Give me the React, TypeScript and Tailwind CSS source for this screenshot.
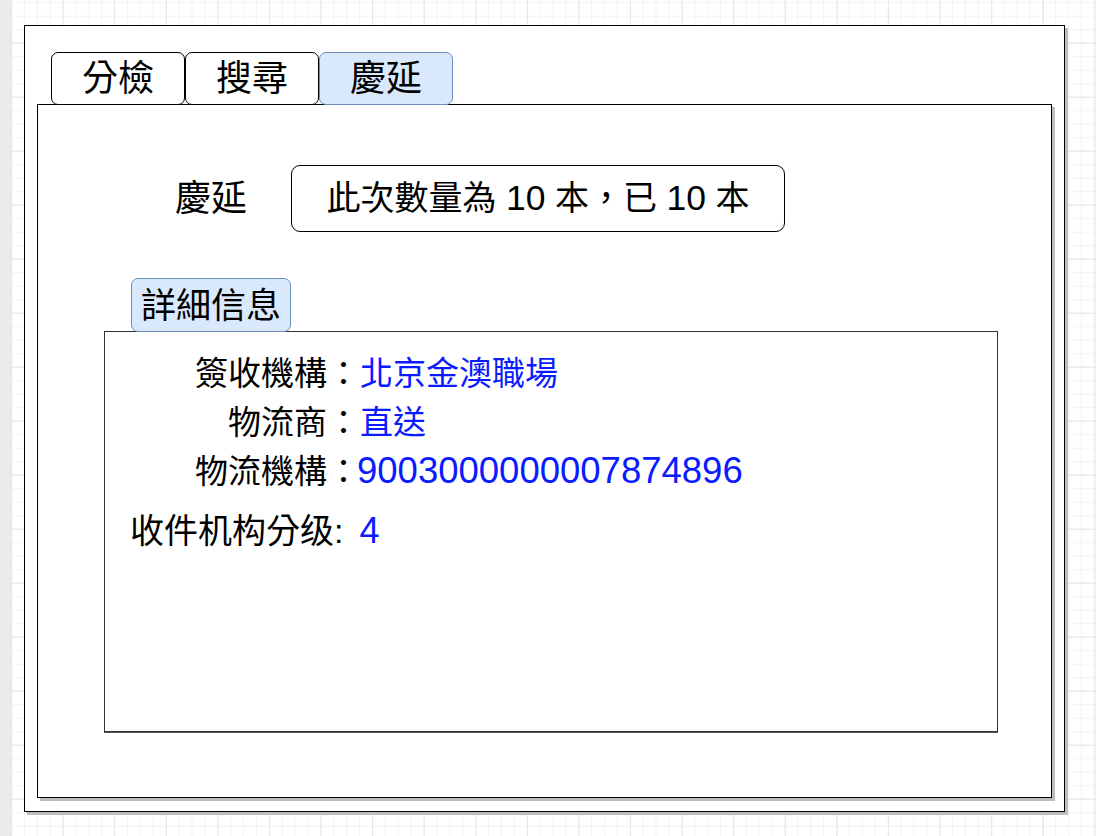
import React from 'react';

const font = { fontFamily: '"Liberation Sans", "Noto Sans CJK TC", sans-serif' };

const tabs = [
    { label: '分檢', active: false },
    { label: '搜尋', active: false },
    { label: '慶延', active: true },
];

const details = [
    { label: '簽收機構：', value: '北京金澳職場' },
    { label: '物流商：', value: '直送' },
    { label: '物流機構：', value: '9003000000007874896', num: true },
];

export default function App() {
    return (
        <div className="flex min-h-screen w-full text-black" style={font}>
            {/* left gutter */}
            <div className="w-[11px] shrink-0 bg-[#ebebeb]" />

            {/* canvas with grid */}
            <div className="h-[836px] flex-1 bg-white bg-[linear-gradient(to_right,#e6e6e6_1px,transparent_1px),linear-gradient(to_bottom,#e6e6e6_1px,transparent_1px),linear-gradient(to_right,#f3f3f3_1px,transparent_1px),linear-gradient(to_bottom,#f3f3f3_1px,transparent_1px)] bg-[size:51.6px_54px,51.6px_54px,12.9px_13.5px,12.9px_13.5px] bg-[position:51.6px_42.7px,51.6px_42.7px,0px_2.2px,0px_2.2px] pl-[13px] pt-[25px]">
                {/* outer frame */}
                <div className="flex h-[787px] w-[1041px] flex-col border-[1.5px] border-black bg-white pl-[12px] pt-[26px] shadow-[3px_3px_0_#bdbdbd]">
                    {/* tabs */}
                    <div className="relative z-10 flex pl-[14px]">
                        {tabs.map((t) => (
                            <div
                                key={t.label}
                                className={`flex h-[53px] w-[134px] items-center justify-center rounded-[7px] border text-[36px] leading-none ${
                                    t.active ? 'border-[#6c8ebf] bg-[#dae8fc]' : 'border-black bg-white'
                                }`}
                            >
                                {t.label}
                            </div>
                        ))}
                    </div>

                    {/* main panel */}
                    <div className="-mt-px h-[694px] w-[1015px] border-[1.5px] border-black bg-white pt-[60px] shadow-[3px_3px_0_#bdbdbd]">
                        <div className="flex items-center pl-[137px]">
                            <span className="text-[36px] leading-none">慶延</span>
                            <div className="ml-[44px] flex h-[67px] w-[494px] items-center justify-center rounded-[9px] border border-black text-[34px] leading-none">
                                <span>
                                    此次數量為 <span className="text-[35.5px]">10</span> 本，已{' '}
                                    <span className="text-[35.5px]">10</span> 本
                                </span>
                            </div>
                        </div>

                        {/* details */}
                        <div className="mt-[46px] pl-[66px]">
                            <div className="relative z-10 ml-[27px] flex h-[54px] w-[160px] items-center justify-center rounded-[7px] border border-[#6c8ebf] bg-[#dae8fc] text-[35px] leading-none">
                                詳細信息
                            </div>
                            <div className="-mt-px h-[401px] w-[894px] border border-[#333] bg-white pt-[17px] shadow-[0_1px_0_#555]">
                                {details.map((d) => (
                                    <div key={d.label} className="flex h-[49px] items-center text-[33px] leading-none">
                                        <span className="w-[255px] text-right">{d.label}</span>
                                        <span className={`text-[#0a1bff] ${d.num ? '-ml-[3px] text-[36.5px]' : ''}`}>{d.value}</span>
                                    </div>
                                ))}
                                <div className="mt-[10px] flex h-[49px] items-center pl-[25px] text-[34px] leading-none">
                                    <span>收件机构分级:</span>
                                    <span className="ml-[16px] text-[36px] text-[#0a1bff]">4</span>
                                </div>
                            </div>
                        </div>
                    </div>
                </div>
            </div>
        </div>
    );
}
